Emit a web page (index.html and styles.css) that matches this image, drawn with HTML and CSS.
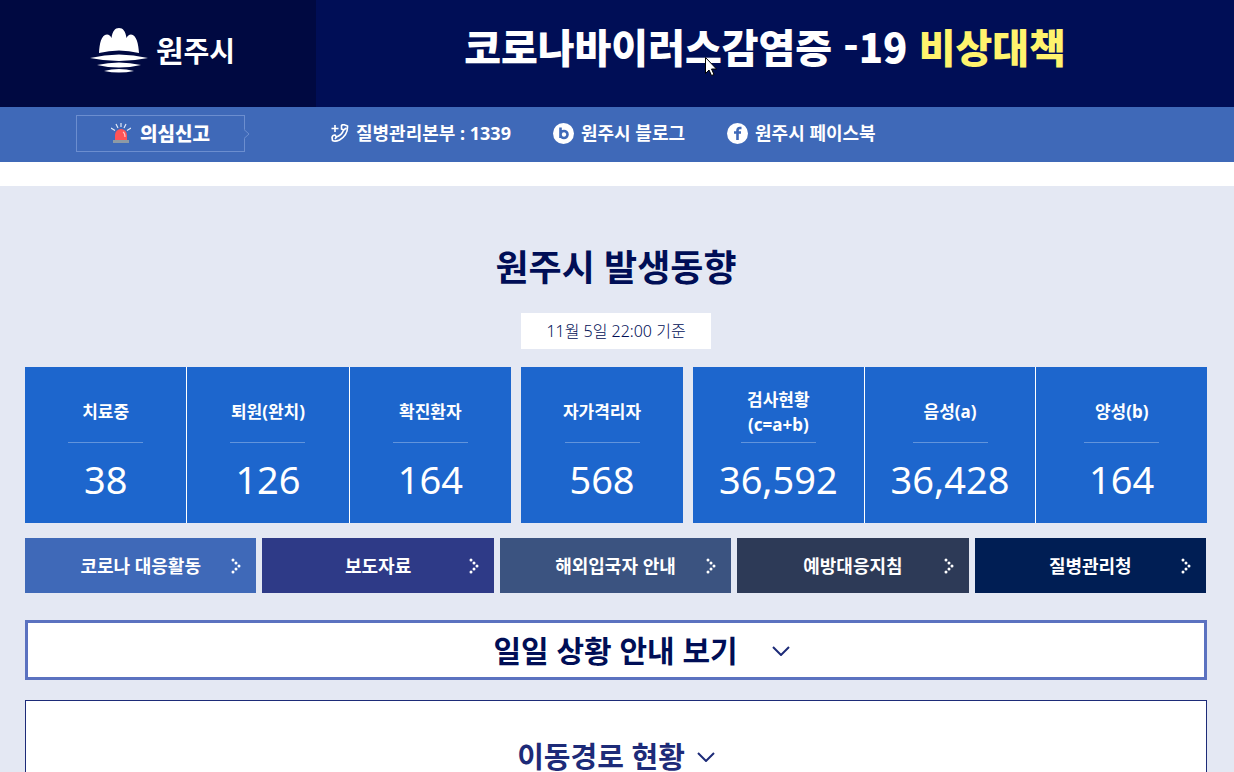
FILE: index.html
```html
<!DOCTYPE html>
<html lang="ko">
<head>
<meta charset="utf-8">
<meta name="viewport" content="width=device-width, initial-scale=1">
<title>원주시 코로나바이러스감염증-19 비상대책</title>
<link rel="stylesheet" href="styles.css">
</head>
<body>
<header class="header">
  <a class="logo" href="#">
    <svg class="logo-mark" viewBox="0 0 58 46" aria-hidden="true">
      <path d="M9 26C9.500 17 11 8 17 7.500C19 7.500 20.500 9 21.500 11C22.500 4 25 1 29 1C33 1 35.500 4 36.500 11C37.500 9 39 7.500 41 7.500C46.500 8 48.500 17 49 26Q29 21 9 26Z"/>
      <path d="M0 31Q29 24 58 31Q29 37 0 31Z"/>
      <path d="M7 38Q29 33 51 38Q29 43 7 38Z"/>
      <path d="M14 44Q29 40 44 44Q29 47 14 44Z"/>
    </svg>
    <span class="logo-text"><span class="logo-first">원</span>주시</span>
  </a>
  <h1 class="title">코로나바이러스감염증 -19 <em class="title-accent">비상대책</em></h1>
</header>

<nav class="nav">
  <a class="report" href="#">
    <svg class="siren" viewBox="0 0 20 20" aria-hidden="true">
      <path class="siren-rays" d="M10 0V4M5 1L7 5M15 1L13 5M0 5L4 7.500M20 5L16 7.500"/>
      <path class="siren-lamp" d="M4 17V12A6 6 0 0 1 16 12V17Z"/>
      <path class="siren-shine" d="M12 9Q14 10 14 14"/>
      <path class="siren-base" d="M2 17H18V20H2Z"/>
    </svg>
    <span>의심신고</span>
    <svg class="report-tip" viewBox="0 0 6 10" aria-hidden="true"><path class="tip-fill" d="M0 0L5 5L0 10Z"/><path class="tip-line" d="M0 .5L5 5L0 9.500"/></svg>
  </a>
  <a class="nav-link" href="#">
    <svg class="nav-icon nav-phone" viewBox="0 0 18 18" aria-hidden="true">
      <path d="M4 1V8M.5 4.500H7.500"/>
      <path d="M10.500 1.500Q12 0 14 1L16.500 2Q17 11 8.500 16Q4 18 1.500 16.500L1 13.500Q1.500 11 4 11L5.500 13Q11 11 12.500 6L10.500 5Z"/>
      <path d="M12.500 6L15.500 4M5.500 13L4 15"/>
    </svg>
    <span>질병관리본부 : 1339</span>
  </a>
  <a class="nav-link" href="#">
    <svg class="nav-icon" viewBox="0 0 21 21" aria-hidden="true">
      <circle class="disc" cx="10.500" cy="10.500" r="10.500"/>
      <path class="blog-b" d="M7.500 4.500V15M7.500 11.500A3.500 3.500 0 1 1 14.500 11.500A3.500 3.500 0 1 1 7.500 11.500"/>
    </svg>
    <span>원주시 블로그</span>
  </a>
  <a class="nav-link" href="#">
    <svg class="nav-icon" viewBox="0 0 21 21" aria-hidden="true">
      <circle class="disc" cx="10.500" cy="10.500" r="10.500"/>
      <path class="face-f" d="M14.500 5H13Q10.500 5 10.500 7.500V17M7 9.500H14"/>
    </svg>
    <span>원주시 페이스북</span>
  </a>
</nav>

<main class="main">
  <h2 class="heading">원주시 발생동향</h2>
  <p class="date">11월 5일 22:00 기준</p>

  <div class="stats">
    <dl class="group">
      <div class="card"><dt>치료중</dt><dd>38</dd></div>
      <div class="card"><dt>퇴원(완치)</dt><dd>126</dd></div>
      <div class="card"><dt>확진환자</dt><dd>164</dd></div>
    </dl>
    <dl class="group">
      <div class="card"><dt>자가격리자</dt><dd>568</dd></div>
    </dl>
    <dl class="group">
      <div class="card"><dt>검사현황<br>(c=a+b)</dt><dd>36,592</dd></div>
      <div class="card"><dt>음성(a)</dt><dd>36,428</dd></div>
      <div class="card"><dt>양성(b)</dt><dd>164</dd></div>
    </dl>
  </div>

  <div class="links">
    <a class="link link-blue" href="#">코로나 대응활동<svg class="dots" viewBox="0 0 10 16"><path d="M2 2h0M5 5h0M8 8h0M5 11h0M2 14h0"/></svg></a>
    <a class="link link-indigo" href="#">보도자료<svg class="dots" viewBox="0 0 10 16"><path d="M2 2h0M5 5h0M8 8h0M5 11h0M2 14h0"/></svg></a>
    <a class="link link-steel" href="#">해외입국자 안내<svg class="dots" viewBox="0 0 10 16"><path d="M2 2h0M5 5h0M8 8h0M5 11h0M2 14h0"/></svg></a>
    <a class="link link-slate" href="#">예방대응지침<svg class="dots" viewBox="0 0 10 16"><path d="M2 2h0M5 5h0M8 8h0M5 11h0M2 14h0"/></svg></a>
    <a class="link link-navy" href="#">질병관리청<svg class="dots" viewBox="0 0 10 16"><path d="M2 2h0M5 5h0M8 8h0M5 11h0M2 14h0"/></svg></a>
  </div>

  <button class="daily" type="button">
    <span>일일 상황 안내 보기</span>
    <svg class="chevron" viewBox="0 0 18 10" aria-hidden="true"><path d="M1 1L9 9L17 1"/></svg>
  </button>

  <section class="route">
    <h2 class="route-title">
      <button class="route-toggle" type="button">
        <span>이동경로 현황</span>
        <svg class="chevron" viewBox="0 0 18 10" aria-hidden="true"><path d="M1 1L9 9L17 1"/></svg>
      </button>
    </h2>
  </section>
</main>

<svg class="cursor" viewBox="0 0 12 19" aria-hidden="true"><path d="M.5 .5V16.500L4 13L6.500 18.500L9 17.500L6.500 12H11.500Z"/></svg>
</body>
</html>
```
FILE: styles.css
```css
* {
  box-sizing: border-box;
}

body {
  display: flex;
  flex-direction: column;
  min-height: 100vh;
  margin: 0;
  background: #fff;
  color: #000e56;
  font-family: "Noto Sans", "Noto Sans CJK KR", sans-serif;
}

a {
  color: inherit;
  text-decoration: none;
}

button {
  padding: 0;
  border: 0;
  background: none;
  color: inherit;
  font: inherit;
  cursor: pointer;
}

h1, h2, p, dl, dd {
  margin: 0;
}

/* Header */
.header {
  display: flex;
  height: 107px;
  background: #000e56;
  color: #fff;
}

.logo {
  display: flex;
  flex: none;
  align-items: center;
  gap: 8px;
  width: 316px;
  padding: 0 0 8px 90px;
  background: #000941;
}

.logo-mark {
  width: 58px;
  height: 46px;
  fill: #fff;
}

.logo-text {
  font-family: "Noto Sans CJK KR", sans-serif;
  font-size: 28px;
  font-weight: 700;
  line-height: 40px;
}

.logo-first {
  font-size: 30px;
}

.title {
  flex: 1;
  padding-right: 20px;
  font-family: "Noto Sans CJK KR", sans-serif;
  font-size: 40px;
  font-weight: 900;
  line-height: 92px;
  text-align: center;
  white-space: nowrap;
}

.title-accent {
  color: #fff36d;
  font-style: normal;
}

/* Contact bar */
.nav {
  display: flex;
  flex: none;
  align-items: center;
  gap: 42px;
  height: 55px;
  padding: 0 0 3px 76px;
  background: #3f69b8;
  color: #fff;
  font-size: 18px;
  font-weight: 700;
  line-height: 28px;
  white-space: nowrap;
}

.report {
  position: relative;
  display: flex;
  align-items: center;
  justify-content: center;
  gap: 9px;
  width: 169px;
  height: 37px;
  margin-right: 44px;
  border: 1px solid #6c8ecf;
  font-family: "Noto Sans CJK KR", sans-serif;
  font-size: 19px;
  font-weight: 900;
}

.report-tip {
  position: absolute;
  top: 13px;
  right: -6px;
  width: 6px;
  height: 10px;
}

.tip-fill {
  fill: #3f69b8;
}

.tip-line {
  fill: none;
  stroke: #6c8ecf;
}

.siren {
  width: 20px;
  height: 20px;
}

.siren-rays {
  stroke: #e3eaf6;
  stroke-width: 1.2;
}

.siren-lamp {
  fill: #ff5457;
}

.siren-shine {
  fill: none;
  stroke: #ffc4c5;
  stroke-width: 1.2;
}

.siren-base {
  fill: #8d9aa5;
}

.nav-link {
  display: flex;
  align-items: center;
  gap: 7px;
}

.nav-icon {
  width: 21px;
  height: 21px;
}

.nav-phone {
  width: 18px;
  height: 18px;
  fill: none;
  stroke: #fff;
  stroke-width: 1.6;
}

.disc {
  fill: #fff;
}

.blog-b,
.face-f {
  fill: none;
  stroke: #3f69b8;
  stroke-width: 2.6;
}

/* Status */
.main {
  display: flex;
  flex: 1;
  flex-direction: column;
  margin-top: 24px;
  padding: 54px 27px 0 25px;
  background: #e4e8f3;
}

.heading {
  font-size: 36px;
  font-weight: 700;
  line-height: 56px;
  text-align: center;
}

.date {
  align-self: center;
  margin: 17px 0 18px;
  padding: 1px 25px 0;
  background: #fff;
  font-size: 16px;
  font-weight: 300;
  line-height: 35px;
}

.stats {
  display: grid;
  grid-template-columns: 486fr 162fr 514fr;
  gap: 10px;
}

.group {
  display: flex;
}

.card {
  display: flex;
  flex: 1;
  flex-direction: column;
  align-items: center;
  height: 156px;
  padding-top: 16px;
  border-right: 1px solid #fff;
  background: #1d66cd;
  color: #fff;
  text-align: center;
}

.card:last-child {
  border-right: 0;
}

.card dt {
  display: flex;
  flex-direction: column;
  align-items: center;
  justify-content: center;
  width: 75px;
  height: 60px;
  padding-bottom: 2px;
  border-bottom: 1px solid #6194dc;
  font-size: 17px;
  font-weight: 700;
  line-height: 25px;
  white-space: nowrap;
}

.card dd {
  font-size: 38px;
  line-height: 72px;
}

/* Shortcuts */
.links {
  display: grid;
  grid-template-columns: repeat(5, 1fr);
  gap: 6px;
  margin: 15px 1px 27px 0;
}

.link {
  position: relative;
  height: 55px;
  color: #fff;
  font-size: 18px;
  font-weight: 700;
  line-height: 57px;
  text-align: center;
  white-space: nowrap;
}

.link-blue { background: #3f69b8; }
.link-indigo { background: #2e3a87; }
.link-steel { background: #3b5380; }
.link-slate { background: #2d3a57; }
.link-navy { background: #001e54; }

.dots {
  position: absolute;
  top: 20px;
  right: 15px;
  width: 10px;
  height: 16px;
  stroke: #fff;
  stroke-width: 3;
  stroke-linecap: round;
}

/* Panels */
.daily {
  display: flex;
  align-items: center;
  justify-content: center;
  gap: 34px;
  height: 60px;
  padding: 2px 0 0 51px;
  border: 3px solid #5b72c0;
  background: #fff;
  font-size: 30px;
  font-weight: 600;
  line-height: 44px;
}

.chevron {
  width: 18px;
  height: 10px;
  fill: none;
  stroke: #1d2b78;
  stroke-width: 2;
}

.route {
  flex: 1;
  margin-top: 20px;
  padding-top: 34px;
  border: 1px solid #1d2b78;
  border-bottom: 0;
  background: #fff;
  color: #1d2b78;
}

.route-title {
  font-size: 29px;
  font-weight: 600;
  line-height: 44px;
}

.route-toggle {
  display: flex;
  align-items: center;
  gap: 12px;
  margin: 0 auto;
}

.cursor {
  position: absolute;
  top: 57px;
  left: 705px;
  width: 12px;
  height: 19px;
  fill: #fff;
  stroke: #000;
}
```
